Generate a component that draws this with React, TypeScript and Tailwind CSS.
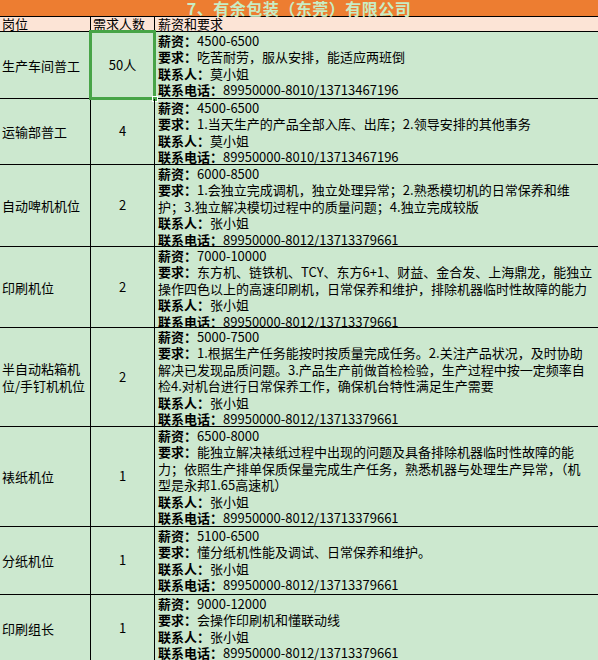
import React from "react";

type Job = {
  title: string[];
  count: string;
  salary: string;
  req: string[];
  contact: string;
  phone: string;
  h: string;
  selected?: boolean;
};

const jobs: Job[] = [
  {
    title: ["生产车间普工"],
    count: "50人",
    salary: "4500-6500",
    req: ["吃苦耐劳，服从安排，能适应两班倒"],
    contact: "莫小姐",
    phone: "89950000-8010/13713467196",
    h: "h-[67px]",
    selected: true,
  },
  {
    title: ["运输部普工"],
    count: "4",
    salary: "4500-6500",
    req: ["1.当天生产的产品全部入库、出库；2.领导安排的其他事务"],
    contact: "莫小姐",
    phone: "89950000-8010/13713467196",
    h: "h-[66px]",
  },
  {
    title: ["自动啤机机位"],
    count: "2",
    salary: "6000-8500",
    req: [
      "1.会独立完成调机，独立处理异常；2.熟悉模切机的日常保养和维",
      "护；3.独立解决模切过程中的质量问题；4.独立完成较版",
    ],
    contact: "张小姐",
    phone: "89950000-8012/13713379661",
    h: "h-[82px]",
  },
  {
    title: ["印刷机位"],
    count: "2",
    salary: "7000-10000",
    req: [
      "东方机、链铁机、TCY、东方6+1、财益、金合发、上海鼎龙，能独立",
      "操作四色以上的高速印刷机，日常保养和维护，排除机器临时性故障的能力",
    ],
    contact: "张小姐",
    phone: "89950000-8012/13713379661",
    h: "h-[81px]",
  },
  {
    title: ["半自动粘箱机", "位/手钉机机位"],
    count: "2",
    salary: "5000-7500",
    req: [
      "1.根据生产任务能按时按质量完成任务。2.关注产品状况，及时协助",
      "解决已发现品质问题。3.产品生产前做首检检验，生产过程中按一定频率自",
      "检4.对机台进行日常保养工作，确保机台特性满足生产需要",
    ],
    contact: "张小姐",
    phone: "89950000-8012/13713379661",
    h: "h-[99px]",
  },
  {
    title: ["裱纸机位"],
    count: "1",
    salary: "6500-8000",
    req: [
      "能独立解决裱纸过程中出现的问题及具备排除机器临时性故障的能",
      "力；依照生产排单保质保量完成生产任务，熟悉机器与处理生产异常，（机",
      "型是永邦1.65高速机）",
    ],
    contact: "张小姐",
    phone: "89950000-8012/13713379661",
    h: "h-[100px]",
  },
  {
    title: ["分纸机位"],
    count: "1",
    salary: "5100-6500",
    req: ["懂分纸机性能及调试、日常保养和维护。"],
    contact: "张小姐",
    phone: "89950000-8012/13713379661",
    h: "h-[68px]",
  },
  {
    title: ["印刷组长"],
    count: "1",
    salary: "9000-12000",
    req: ["会操作印刷机和懂联动线"],
    contact: "张小姐",
    phone: "89950000-8012/13713379661",
    h: "h-[67px]",
  },
];

export default function App() {
  return (
    <div
      className="w-[598px] h-[660px] overflow-hidden bg-[#cce8cf] text-black text-[13px] leading-[16.4px]"
      style={{ fontFamily: '"Noto Sans CJK SC", "Noto Sans", sans-serif' }}
    >
      <div className="h-[17px] bg-[#ed7d31] border-b border-black flex items-center justify-center">
        <span className="text-[16px] font-bold text-[#c8ecc4] leading-[16px] tracking-[0.5px]">
          7、有余包装（东莞）有限公司
        </span>
      </div>
      <div className="h-[15px] bg-[#fce4d6] border-b border-black flex leading-[14px]">
        <div className="w-[91px] border-r border-black pl-[2px] shrink-0">岗位</div>
        <div className="w-[64px] border-r border-black pl-[2px] shrink-0">需求人数</div>
        <div className="flex-1 pl-[3px]">薪资和要求</div>
      </div>
      {jobs.map((j, i) => (
        <div key={i} className={`${j.h} border-b border-black flex`}>
          <div className="w-[91px] shrink-0 border-r border-black pl-[2px] flex flex-col justify-center">
            {j.title.map((t, k) => (
              <div key={k} className="whitespace-nowrap leading-[17px]">
                {t}
              </div>
            ))}
          </div>
          <div className="relative w-[64px] shrink-0 border-r border-black flex items-center justify-center">
            {j.count}
            {j.selected && (
              <>
                <div className="absolute -left-[2px] -top-[2px] -right-[2px] -bottom-[2px] border-[3px] border-[#47a447]" />
                <div className="absolute -right-[4px] -bottom-[4px] w-[6px] h-[6px] bg-[#47a447] border border-white" />
              </>
            )}
          </div>
          <div className="flex-1 min-w-0 overflow-hidden pl-[3px] pt-[1px]">
            <div className="whitespace-nowrap">
              <span className="font-bold">薪资：</span>
              {j.salary}
            </div>
            {j.req.map((r, k) => (
              <div key={k} className="whitespace-nowrap">
                {k === 0 && <span className="font-bold">要求：</span>}
                {r}
              </div>
            ))}
            <div className="whitespace-nowrap">
              <span className="font-bold">联系人：</span>
              {j.contact}
            </div>
            <div className="whitespace-nowrap">
              <span className="font-bold">联系电话：</span>
              {j.phone}
            </div>
          </div>
        </div>
      ))}
    </div>
  );
}
